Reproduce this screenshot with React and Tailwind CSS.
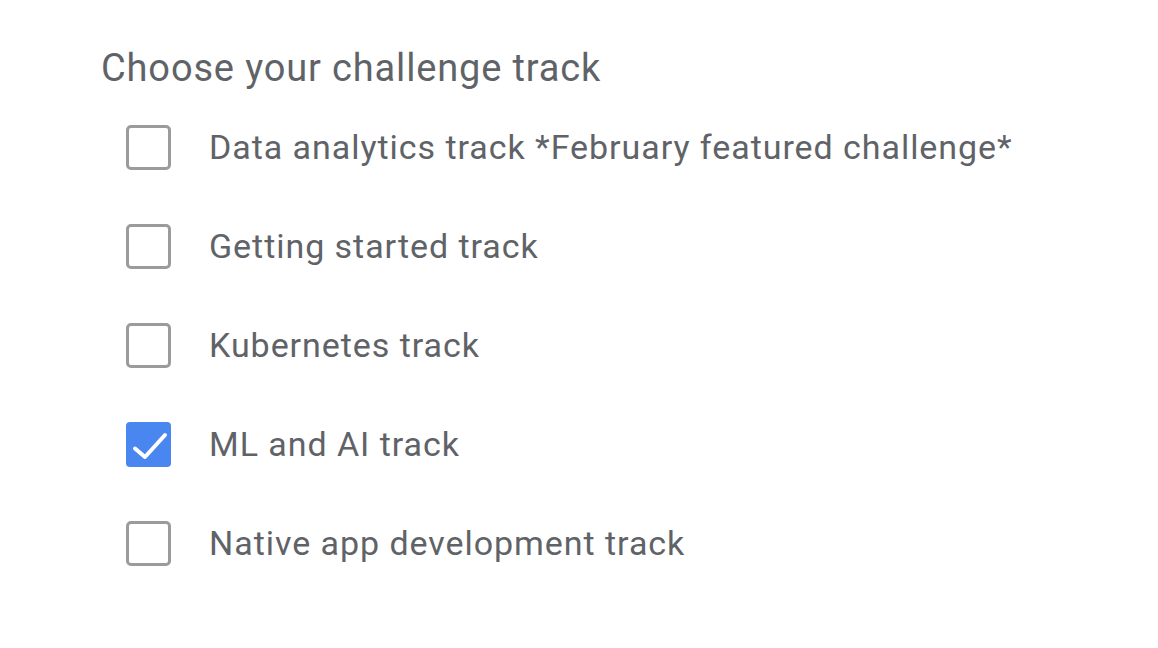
import React from 'react';

const tracks = [
  { label: 'Data analytics track *February featured challenge*', checked: false },
  { label: 'Getting started track', checked: false },
  { label: 'Kubernetes track', checked: false },
  { label: 'ML and AI track', checked: true },
  { label: 'Native app development track', checked: false },
];

function Box({ checked }) {
  if (checked) {
    return (
      <span className="flex h-[45px] w-[45px] shrink-0 rounded-[4px] bg-[#4a86f0]">
        <svg width="45" height="45" viewBox="0 0 45 45" fill="none">
          <path d="M9 26.5l10 8.5 20-22" stroke="#fff" strokeWidth="4" strokeLinecap="round" strokeLinejoin="round" />
        </svg>
      </span>
    );
  }
  return <span className="h-[45px] w-[45px] shrink-0 rounded-[5px] border-[3.5px] border-[#9b9b9b] bg-white" />;
}

export default function App() {
  return (
    <div className="min-h-[648px] bg-white pl-[101px] pt-[45px] text-[#5f6368]" style={{ fontFamily: 'Roboto, "Noto Sans", sans-serif' }}>
      <h2 className="text-[38px] leading-[46px] font-normal tracking-[0.85px]">Choose your challenge track</h2>
      <ul className="mt-[34px] flex flex-col gap-[54px] pl-[25px]">
        {tracks.map((t) => (
          <li key={t.label} className="flex h-[45px] items-center gap-[38px]">
            <Box checked={t.checked} />
            <span className="text-[34px] tracking-[0.95px]">{t.label}</span>
          </li>
        ))}
      </ul>
    </div>
  );
}
